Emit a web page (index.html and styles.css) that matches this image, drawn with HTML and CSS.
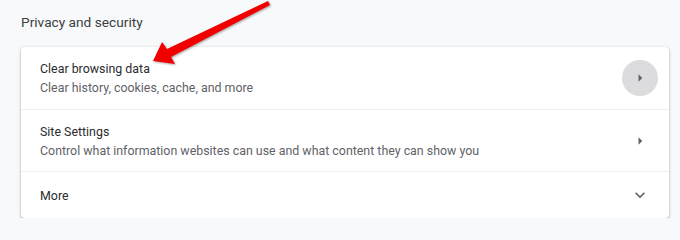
FILE: index.html
```html
<!DOCTYPE html>
<html lang="en">
<head>
  <meta charset="UTF-8">
  <title>Privacy and security</title>
  <link rel="stylesheet" href="styles.css">
</head>
<body>
  <div class="page">
    <h2 class="section-title">Privacy and security</h2>

    <div class="card">
      <div class="row">
        <div class="row-text">
          <div class="row-title">Clear browsing data</div>
          <div class="row-sub">Clear history, cookies, cache, and more</div>
        </div>
        <div class="icon-btn active">
          <svg viewBox="0 0 24 24" width="18" height="18"><path d="M10 17l5-5-5-5v10z"/></svg>
        </div>
      </div>

      <div class="row">
        <div class="row-text">
          <div class="row-title">Site Settings</div>
          <div class="row-sub">Control what information websites can use and what content they can show you</div>
        </div>
        <div class="icon-btn">
          <svg viewBox="0 0 24 24" width="18" height="18"><path d="M10 17l5-5-5-5v10z"/></svg>
        </div>
      </div>

      <div class="row short">
        <div class="row-text">
          <div class="row-title">More</div>
        </div>
        <div class="icon-btn">
          <svg viewBox="0 0 24 24" width="20" height="20"><path d="M16.59 8.59L12 13.17 7.41 8.59 6 10l6 6 6-6z"/></svg>
        </div>
      </div>
    </div>

    <!-- annotation arrow drawn over the screenshot -->
    <svg class="pointer" width="680" height="240" viewBox="0 0 680 240">
      <polygon points="153,61 162,42 167,49 268,1 270,5 171,57 175,64" />
    </svg>
  </div>
</body>
</html>
```

FILE: styles.css
```css
body {
  margin: 0;
  background-color: #f8f9fa;
  font-family: Roboto, "Liberation Sans", Arial, sans-serif;
  color: #202124;
}

.page {
  position: relative;
  padding: 12px 11px 0 21px;
}

.section-title {
  margin: 0 0 15px 0;
  font-size: 13.7px;
  font-weight: 400;
  line-height: 20px;
  color: #3c4043;
}

.card {
  background: #ffffff;
  border-radius: 4px;
  box-shadow: 0 1px 2px rgba(60, 64, 67, 0.3), 0 1px 3px 1px rgba(60, 64, 67, 0.12);
}

.row {
  display: flex;
  align-items: center;
  height: 61px;
  padding: 0 11px 0 19px;
  border-top: 1px solid #eeeeee;
}

.row:first-child {
  border-top: none;
  height: 62px;
}

.row.short {
  height: 46px;
}

.row-text {
  flex: 1;
}

.row-title {
  font-size: 12.4px;
  line-height: 19px;
  color: #2b2c2e;
}

.row-sub {
  font-size: 12.4px;
  line-height: 19px;
  color: #5f6368;
}

.icon-btn {
  width: 36px;
  height: 36px;
  border-radius: 50%;
  display: flex;
  align-items: center;
  justify-content: center;
  fill: #5f6368;
}

.icon-btn.active {
  background: #dcdcde;
}

.pointer {
  position: absolute;
  left: 0;
  top: 0;
  pointer-events: none;
}

.pointer polygon {
  fill: #f20000;
  filter: drop-shadow(1px 1px 1px rgba(0, 0, 0, 0.35));
}
```
